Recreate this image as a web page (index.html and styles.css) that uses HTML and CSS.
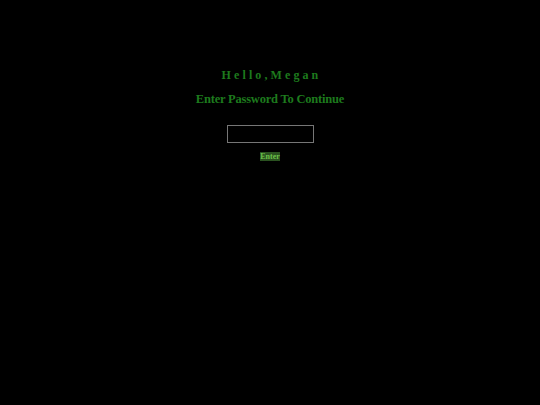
FILE: index.html
```html
<!DOCTYPE html>
<html>
<head>
<meta charset="utf-8">
<link rel="stylesheet" href="styles.css">
</head>
<body>
<main class="login">
  <h1 class="greeting">Hello,Megan</h1>
  <h2 class="prompt">Enter Password To Continue</h2>
  <form class="form">
    <input class="password" type="password">
    <button class="enter" type="button">Enter</button>
  </form>
</main>
</body>
</html>
```
FILE: styles.css
```css
html, body {
  margin: 0;
  padding: 0;
  background: #000;
  height: 100%;
}
body {
  font-family: "Liberation Serif", "Times New Roman", serif;
  color: #1d7a1d;
}
.login {
  display: flex;
  flex-direction: column;
  align-items: center;
  padding-top: 67px;
}
.greeting {
  margin: 0;
  font-size: 12px;
  font-weight: bold;
  letter-spacing: 3.1px;
  line-height: 16px;
  padding-left: 3px;
}
.prompt {
  margin: 8px 0 0;
  font-size: 12.5px;
  font-weight: bold;
  letter-spacing: -0.2px;
  line-height: 16px;
}
.form {
  display: flex;
  flex-direction: column;
  align-items: center;
  margin-top: 18px;
}
.password {
  width: 83px;
  height: 14px;
  box-sizing: content-box;
  padding: 1px;
  border: 1px solid #767676;
  background: #000;
  margin: 0;
}
.enter {
  margin-top: 9px;
  font-family: "Liberation Serif", serif;
  font-size: 8px;
  font-weight: bold;
  color: #6cc04a;
  background: #2a5220;
  border: none;
  padding: 0;
  line-height: 9px;
  height: 9px;
}
```
